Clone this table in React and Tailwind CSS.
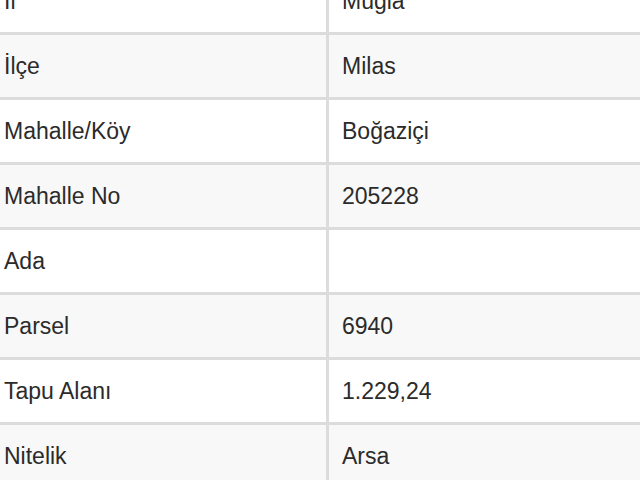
import React from 'react'

const rows = [
    ['İl', 'Muğla'],
    ['İlçe', 'Milas'],
    ['Mahalle/Köy', 'Boğaziçi'],
    ['Mahalle No', '205228'],
    ['Ada', ''],
    ['Parsel', '6940'],
    ['Tapu Alanı', '1.229,24'],
    ['Nitelik', 'Arsa'],
]

const App = () => {
    return (
        <div className="w-[640px] h-[480px] overflow-hidden bg-white text-[#2b2b2b] font-['Liberation_Sans',Arial,sans-serif] text-[23px]">
            <div className="-mt-[30px]">
                {rows.map(([label, value], i) => (
                    <div key={label} className={`flex h-[65px] border-b-[3px] border-[#dcdcdc] ${i % 2 === 1 ? 'bg-[#f8f8f8]' : 'bg-white'}`}>
                        <div className="w-[326px] flex items-center pl-[4px]">{label}</div>
                        <div className="flex-1 flex items-center pl-[13px] border-l-[3px] border-[#dcdcdc]">{value}</div>
                    </div>
                ))}
            </div>
        </div>
    )
}

export default App
